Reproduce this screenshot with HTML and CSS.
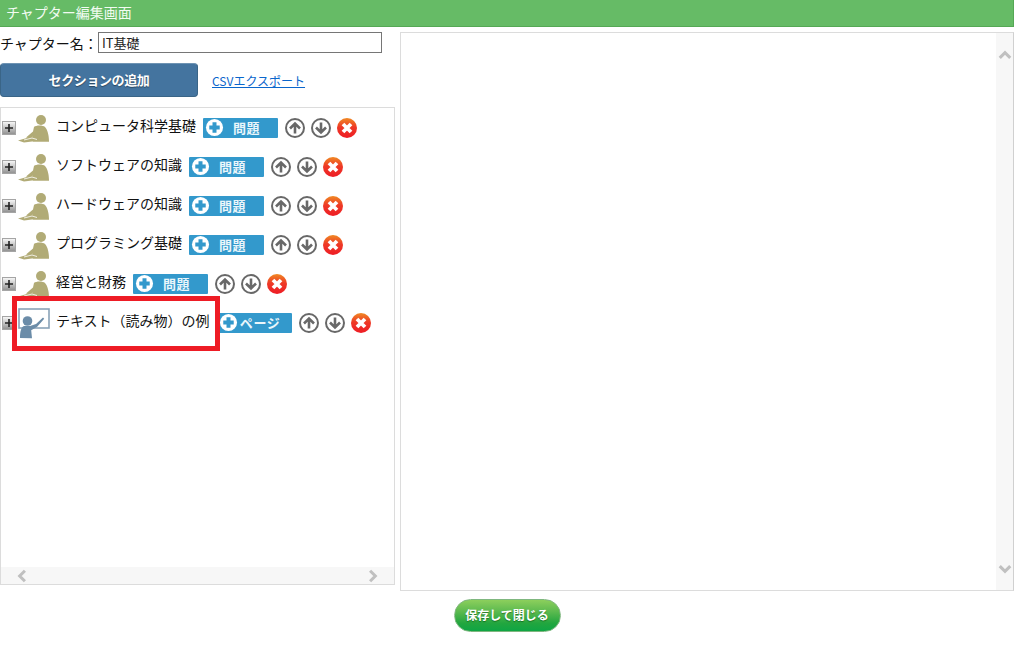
FILE: index.html
```html
<!DOCTYPE html>
<html lang="ja">
<head>
<meta charset="utf-8">
<title>チャプター編集画面</title>
<link rel="stylesheet" href="styles.css">
</head>
<body>
<svg class="defs" width="0" height="0" aria-hidden="true">
  <defs>
    <linearGradient id="redg" x1="0" y1="0" x2="0" y2="1"><stop offset="0" stop-color="#f08a24"/><stop offset=".45" stop-color="#ee3a26"/><stop offset="1" stop-color="#ee1c25"/></linearGradient>
    <linearGradient id="expg" x1="0" y1="0" x2="0" y2="1"><stop offset="0" stop-color="#fafafa"/><stop offset="1" stop-color="#8f8f8f"/></linearGradient>
    <symbol id="i-expand" viewBox="0 0 14 14">
      <rect x=".5" y=".5" width="13" height="13" fill="url(#expg)" stroke="#a5a5a5"/>
      <path d="M3 7h8M7 3v8" stroke="#222" stroke-width="1.600"/>
    </symbol>
    <symbol id="i-student" viewBox="0 0 32 32">
      <circle cx="23" cy="8" r="5" fill="#b1ab76"/>
      <path d="M16 15c2-2 9-2 11 0 2 2 4 7 4 14.500H15v-5l-3 2-4-1 7-6z" fill="#b1ab76"/>
      <path d="M0 28.500l14-4 17 4.500v.5H14l-8 1z" fill="#b1ab76"/>
      <path d="M6 28l8-2 5 1.500" stroke="#fff" stroke-width=".8" fill="none"/>
    </symbol>
    <symbol id="i-teacher" viewBox="0 0 32 32">
      <rect x="1" y="2" width="30" height="19" fill="#fff" stroke="#8aa3b8" stroke-width="1.600"/>
      <circle cx="9.500" cy="14" r="4.800" fill="#6b8ca8"/>
      <path d="M2 31c0-6 1-11 4-12h6l6-2 7-6.500 1.200 1.200-7 8-6 3.500 .8 8z" fill="#6b8ca8"/>
    </symbol>
    <symbol id="i-plus" viewBox="0 0 20 20">
      <circle cx="10" cy="10" r="9" fill="#fff"/>
      <path d="M10 4.500v11M4.500 10h11" stroke="#3399cc" stroke-width="4.200"/>
    </symbol>
    <symbol id="i-up" viewBox="0 0 20 20">
      <circle cx="10" cy="10" r="9" fill="#fff" stroke="#686868" stroke-width="2"/>
      <path d="M10 15.500V6M5 10.500L10 5.500l5 5" fill="none" stroke="#686868" stroke-width="2.600"/>
    </symbol>
    <symbol id="i-down" viewBox="0 0 20 20">
      <circle cx="10" cy="10" r="9" fill="#fff" stroke="#686868" stroke-width="2"/>
      <path d="M10 4.500V14M5 9.500l5 5 5-5" fill="none" stroke="#686868" stroke-width="2.600"/>
    </symbol>
    <symbol id="i-del" viewBox="0 0 20 20">
      <circle cx="10" cy="10" r="10" fill="url(#redg)"/>
      <path d="M6 6l8 8M14 6l-8 8" stroke="#fff" stroke-width="3.800"/>
    </symbol>
  </defs>
</svg>

<header class="title-bar">チャプター編集画面</header>

<main class="workspace">
  <section class="left-col">
    <div class="name-row">
      <label class="name-label" for="chapter-name">チャプター名：</label>
      <input class="name-input" id="chapter-name" type="text" value="IT基礎">
    </div>
    <div class="action-row">
      <button class="add-section" type="button">セクションの追加</button>
      <a class="csv-link" href="#">CSVエクスポート</a>
    </div>
    <div class="tree-panel">
      <ul class="tree">
        <li class="tree-row">
          <svg class="ic-expand"><use href="#i-expand"/></svg>
          <svg class="ic-node"><use href="#i-student"/></svg>
          <span class="node-label">コンピュータ科学基礎</span>
          <button class="add-item" type="button"><svg class="ic-plus"><use href="#i-plus"/></svg><span class="add-text">問題</span></button>
          <span class="row-tools"><svg class="ic-tool"><use href="#i-up"/></svg><svg class="ic-tool"><use href="#i-down"/></svg><svg class="ic-tool"><use href="#i-del"/></svg></span>
        </li>
        <li class="tree-row">
          <svg class="ic-expand"><use href="#i-expand"/></svg>
          <svg class="ic-node"><use href="#i-student"/></svg>
          <span class="node-label">ソフトウェアの知識</span>
          <button class="add-item" type="button"><svg class="ic-plus"><use href="#i-plus"/></svg><span class="add-text">問題</span></button>
          <span class="row-tools"><svg class="ic-tool"><use href="#i-up"/></svg><svg class="ic-tool"><use href="#i-down"/></svg><svg class="ic-tool"><use href="#i-del"/></svg></span>
        </li>
        <li class="tree-row">
          <svg class="ic-expand"><use href="#i-expand"/></svg>
          <svg class="ic-node"><use href="#i-student"/></svg>
          <span class="node-label">ハードウェアの知識</span>
          <button class="add-item" type="button"><svg class="ic-plus"><use href="#i-plus"/></svg><span class="add-text">問題</span></button>
          <span class="row-tools"><svg class="ic-tool"><use href="#i-up"/></svg><svg class="ic-tool"><use href="#i-down"/></svg><svg class="ic-tool"><use href="#i-del"/></svg></span>
        </li>
        <li class="tree-row">
          <svg class="ic-expand"><use href="#i-expand"/></svg>
          <svg class="ic-node"><use href="#i-student"/></svg>
          <span class="node-label">プログラミング基礎</span>
          <button class="add-item" type="button"><svg class="ic-plus"><use href="#i-plus"/></svg><span class="add-text">問題</span></button>
          <span class="row-tools"><svg class="ic-tool"><use href="#i-up"/></svg><svg class="ic-tool"><use href="#i-down"/></svg><svg class="ic-tool"><use href="#i-del"/></svg></span>
        </li>
        <li class="tree-row">
          <svg class="ic-expand"><use href="#i-expand"/></svg>
          <svg class="ic-node"><use href="#i-student"/></svg>
          <span class="node-label">経営と財務</span>
          <button class="add-item" type="button"><svg class="ic-plus"><use href="#i-plus"/></svg><span class="add-text">問題</span></button>
          <span class="row-tools"><svg class="ic-tool"><use href="#i-up"/></svg><svg class="ic-tool"><use href="#i-down"/></svg><svg class="ic-tool"><use href="#i-del"/></svg></span>
        </li>
        <li class="tree-row">
          <svg class="ic-expand"><use href="#i-expand"/></svg>
          <svg class="ic-node"><use href="#i-teacher"/></svg>
          <span class="node-label">テキスト（読み物）の例</span>
          <button class="add-item" type="button"><svg class="ic-plus"><use href="#i-plus"/></svg><span class="add-text">ページ</span></button>
          <span class="row-tools"><svg class="ic-tool"><use href="#i-up"/></svg><svg class="ic-tool"><use href="#i-down"/></svg><svg class="ic-tool"><use href="#i-del"/></svg></span>
          <span class="highlight"></span>
        </li>
      </ul>
      <div class="h-scroll">
        <svg class="arrow" viewBox="0 0 12 12"><path d="M8.500 1.500L4 6l4.500 4.500" /></svg>
        <svg class="arrow" viewBox="0 0 12 12"><path d="M3.500 1.500L8 6l-4.500 4.500" /></svg>
      </div>
    </div>
  </section>
  <section class="preview-panel">
    <div class="v-scroll">
      <svg class="arrow" viewBox="0 0 12 12"><path d="M1.500 8.500L6 4l4.500 4.500" /></svg>
      <svg class="arrow" viewBox="0 0 12 12"><path d="M1.500 3.500L6 8l4.500-4.500" /></svg>
    </div>
  </section>
</main>

<footer class="footer">
  <button class="save" type="button">保存して閉じる</button>
</footer>
</body>
</html>
```
FILE: styles.css
```css
* { box-sizing: border-box; }
html, body { margin: 0; padding: 0; height: 100%; }
body {
  background: #fff;
  color: #111;
  font-family: "Noto Sans CJK JP", "Noto Sans", sans-serif;
  font-size: 14px;
  overflow: hidden;
}
.defs { position: absolute; }
.title-bar {
  height: 27px;
  line-height: 24px;
  padding-left: 6px;
  background: #66bb66;
  border: 1px solid #55a855;
  border-width: 0 1px 1px 0;
  color: #f2fbf2;
  font-size: 14px;
}
.workspace {
  display: flex;
  gap: 5px;
  padding-top: 5px;
  height: 564px;
}
.left-col {
  width: 395px;
  display: flex;
  flex-direction: column;
}
.name-row {
  display: flex;
  align-items: center;
  height: 21px;
}
.name-label {
  width: 98px;
  white-space: nowrap;
  line-height: 20px;
  font-size: 14px;
}
.name-input {
  width: 284px;
  height: 21px;
  border: 1px solid #767676;
  padding: 0 3px;
  margin: 0;
  font: 13px "Noto Sans CJK JP", sans-serif;
  color: #222;
  background: #fff;
  border-radius: 0;
  outline: none;
}
.action-row {
  display: flex;
  align-items: center;
  margin-top: 10px;
  height: 34px;
}
.add-section {
  width: 198px;
  height: 34px;
  border: 1px solid #3a6587;
  border-top-color: #6e93b3;
  border-radius: 4px;
  background: #44749f;
  color: #fff;
  font: bold 13px "Noto Sans CJK JP", sans-serif;
  letter-spacing: -.4px;
  padding: 0 0 2px;
  text-shadow: 0 1px 1px rgba(0,0,0,.4);
}
.csv-link {
  margin-left: 14px;
  color: #0a66cc;
  font-size: 12px;
  text-decoration: underline;
}
.tree-panel {
  margin-top: 10px;
  height: 478px;
  flex: none;
  position: relative;
  border: 1px solid #dcdcdc;
  display: flex;
  flex-direction: column;
  justify-content: space-between;
}
.tree {
  list-style: none;
  margin: 0;
  padding: 0 0 0 1px;
}
.tree-row {
  position: relative;
  display: flex;
  align-items: center;
  height: 39px;
}
.ic-expand { width: 14px; height: 14px; flex: none; margin-top: 1px; }
.ic-node { width: 32px; height: 32px; flex: none; margin-left: 2px; margin-top: 1px; }
.node-label {
  margin-left: 6px;
  white-space: nowrap;
  font-size: 14px;
  line-height: 20px;
  margin-top: -6px;
}
.add-item {
  display: flex;
  align-items: center;
  width: 75px;
  height: 20px;
  margin: 0 0 0 7px;
  padding: 0 0 0 2px;
  border: 0;
  border-radius: 1px;
  background: #3399cc;
  color: #eaf6fb;
  font: bold 13px "Noto Sans CJK JP", sans-serif;
  letter-spacing: .6px;
}
.ic-plus { width: 19px; height: 19px; flex: none; }
.add-text { flex: 1; margin: -1px 9px 0 0; text-align: center; white-space: nowrap; }
.row-tools {
  display: flex;
  gap: 6px;
  margin-left: 7px;
}
.ic-tool { width: 20px; height: 20px; flex: none; }
.highlight {
  position: absolute;
  left: 10px;
  top: -7px;
  width: 208px;
  height: 55px;
  border: 5px solid #ee1c25;
  pointer-events: none;
}
.h-scroll {
  height: 17px;
  background: #f7f7f7;
  display: flex;
  justify-content: space-between;
  align-items: center;
  padding: 0 14px;
}
.preview-panel {
  width: 614px;
  height: 559px;
  border: 1px solid #dcdcdc;
  border-right-color: #d0d0d0;
  display: flex;
  justify-content: flex-end;
}
.v-scroll {
  width: 17px;
  background: #f7f7f7;
  display: flex;
  flex-direction: column;
  justify-content: space-between;
  align-items: center;
  padding: 15px 0 14px;
}
.arrow { width: 14px; height: 14px; flex: none; }
.arrow path { fill: none; stroke: #c0c0c0; stroke-width: 2.600; }
.footer {
  display: flex;
  justify-content: center;
  padding-top: 8px;
}
.save {
  width: 107px;
  height: 33px;
  border: 1px solid #7fb77f;
  border-radius: 17px;
  background: linear-gradient(#8ccf5c, #5fbb50 35%, #22a63f 75%, #0fa544);
  color: #fff;
  font: bold 12px "Noto Sans CJK JP", sans-serif;
  padding: 0 0 3px;
  text-shadow: 0 1px 1px rgba(0,60,0,.5);
}
```
